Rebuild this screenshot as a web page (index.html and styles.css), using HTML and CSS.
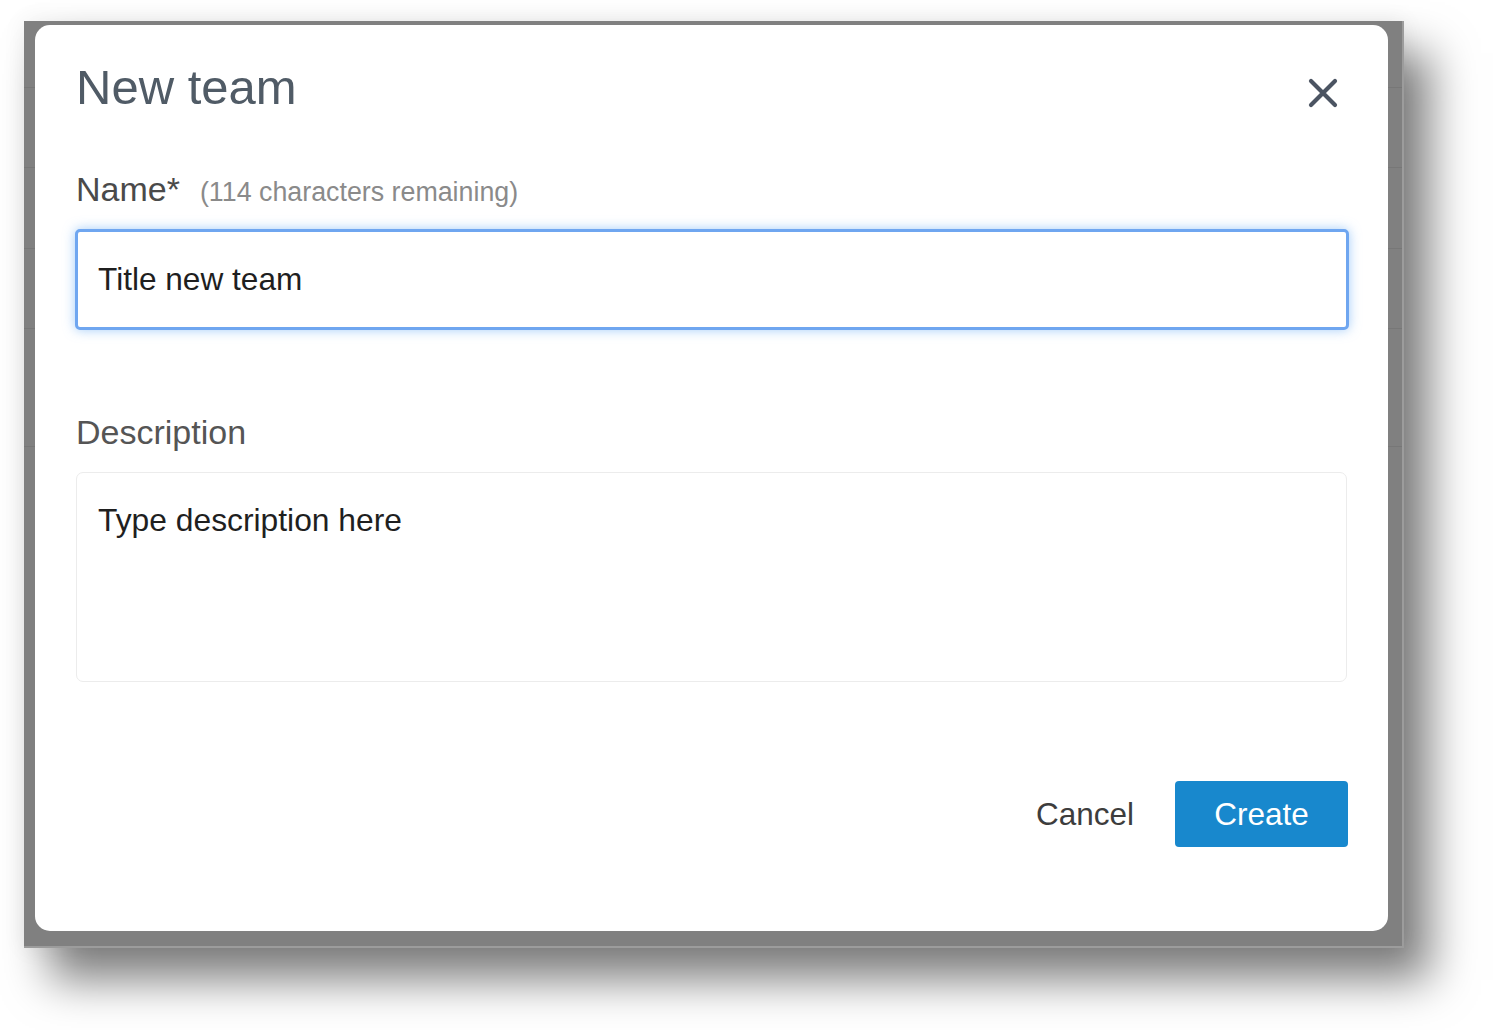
FILE: index.html
```html
<!DOCTYPE html>
<html lang="en">
<head>
<meta charset="utf-8">
<title>New team</title>
<link rel="stylesheet" href="styles.css">
</head>
<body>
<div class="stage">
  <div class="frame">
    <div class="rows">
      <div class="row r1"></div>
      <div class="row r2"></div>
      <div class="row r3"></div>
      <div class="row r4"></div>
      <div class="row r5"></div>
    </div>
    <div class="dialog" role="dialog" aria-labelledby="dlg-title">
      <div class="dialog-header">
        <h1 class="dialog-title" id="dlg-title">New team</h1>
        <button class="close-btn" type="button" aria-label="Close">
          <svg width="30" height="30" viewBox="0 0 30 30" aria-hidden="true">
            <path d="M3 3 L27 27 M27 3 L3 27" stroke="#4b5462" stroke-width="4.2" stroke-linecap="round" fill="none"/>
          </svg>
        </button>
      </div>
      <div class="field field-name">
        <label class="field-label" for="team-name">Name*<span class="hint">(114 characters remaining)</span></label>
        <input class="text-input" id="team-name" type="text" value="Title new team">
      </div>
      <div class="field field-desc">
        <label class="field-label" for="team-desc">Description</label>
        <textarea class="text-area" id="team-desc">Type description here</textarea>
      </div>
      <div class="dialog-footer">
        <button class="btn btn-cancel" type="button">Cancel</button>
        <button class="btn btn-create" type="button">Create</button>
      </div>
    </div>
  </div>
</div>
</body>
</html>
```

FILE: styles.css
```css
html, body {
  margin: 0;
  padding: 0;
  background: #ffffff;
}

body {
  font-family: "Liberation Sans", Arial, sans-serif;
  width: 1508px;
  height: 1030px;
  overflow: hidden;
}

.stage {
  padding: 21px 0 0 24px;
}

.frame {
  position: relative;
  width: 1378px;
  height: 925px;
  background: #808080;
  border-right: 2px solid #9c9c9c;
  border-bottom: 2px solid #9c9c9c;
  box-shadow: 26px 32px 42px rgba(0, 0, 0, 0.5), 0 0 22px rgba(0, 0, 0, 0.07);
}

.rows {
  display: flex;
  flex-direction: column;
}

.row {
  border-bottom: 1px solid #777777;
}
.r1 { height: 66px; }
.r2 { height: 79px; }
.r3 { height: 80px; }
.r4 { height: 79px; }
.r5 { height: 117px; }

.dialog {
  position: absolute;
  left: 11px;
  top: 4px;
  width: 1353px;
  height: 906px;
  box-sizing: border-box;
  background: #ffffff;
  border-radius: 15px;
  padding: 34px 40px 0 41px;
  display: flex;
  flex-direction: column;
}

.dialog-header {
  display: flex;
  justify-content: space-between;
  align-items: flex-start;
}

.dialog-title {
  margin: 0;
  font-size: 49px;
  line-height: 56px;
  font-weight: 400;
  color: #505b66;
}

.close-btn {
  margin: 19px 10px 0 0;
  padding: 0;
  border: 0;
  background: transparent;
  width: 30px;
  height: 30px;
  display: block;
}
.close-btn svg { display: block; }

.field {
  display: flex;
  flex-direction: column;
}

.field-name { margin-top: 56px; }
.field-desc { margin-top: 84px; }

.field-label {
  font-size: 34px;
  line-height: 37px;
  color: #4a4a4a;
}

.field-desc .field-label { color: #555555; }

.hint {
  font-size: 26.8px;
  color: #8a8a8a;
  margin-left: 20px;
}

.text-input {
  margin-top: 18px;
  margin-left: -1px;
  width: 1274px;
  height: 101px;
  box-sizing: border-box;
  border: 3px solid #6fa6f0;
  border-radius: 5px;
  box-shadow: 0 0 12px rgba(102, 170, 245, 0.6);
  padding: 0 0 0 20px;
  font-family: "Liberation Sans", Arial, sans-serif;
  font-size: 31.6px;
  color: #1f1f1f;
  outline: none;
  background: #ffffff;
}

.text-area {
  margin-top: 21px;
  width: 1271px;
  height: 210px;
  box-sizing: border-box;
  border: 1px solid #ececec;
  border-radius: 7px;
  padding: 28px 21px 0 21px;
  font-family: "Liberation Sans", Arial, sans-serif;
  font-size: 31.8px;
  line-height: 39px;
  color: #1f1f1f;
  resize: none;
  outline: none;
  background: #ffffff;
}

.dialog-footer {
  margin-top: 99px;
  display: flex;
  justify-content: flex-end;
  align-items: center;
  gap: 41px;
}

.btn {
  font-family: "Liberation Sans", Arial, sans-serif;
  font-size: 31.5px;
  border: 0;
  padding: 0;
  cursor: pointer;
}

.btn-cancel {
  background: transparent;
  color: #3d3d3d;
  height: 66px;
}

.btn-create {
  width: 173px;
  height: 66px;
  border-radius: 4px;
  background: #1888cd;
  color: #ffffff;
}
```
